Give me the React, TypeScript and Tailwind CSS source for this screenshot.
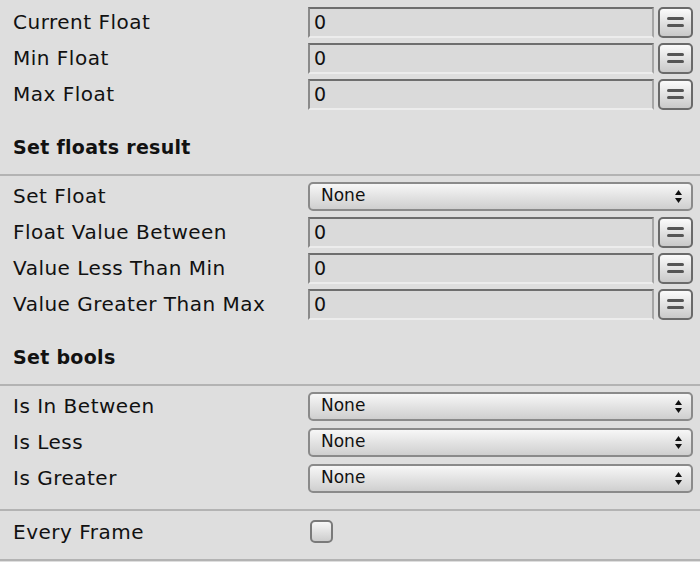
import React from 'react';

const font = { fontFamily: '"DejaVu Sans", "Liberation Sans", sans-serif' };

const Label: React.FC<{ text: string }> = ({ text }) => (
  <div className="w-[308px] shrink-0 pl-[13px] text-[20px] tracking-[0.5px] text-[#111] leading-none">{text}</div>
);

const FloatRow: React.FC<{ label: string }> = ({ label }) => (
  <div className="flex h-[36px] items-center">
    <Label text={label} />
    <div className="flex h-[31px] w-[346px] items-center border-2 border-t-[#6e6e6e] border-l-[#8a8a8a] border-r-[#a6a6a6] border-b-[#ececec] bg-[#dadada] pl-[4px] text-[19px] text-[#111]">
      0
    </div>
    <button className="ml-[4px] flex h-[31px] w-[35px] flex-col items-center justify-center gap-[4px] rounded-[5px] border-2 border-[#6a6a6a] bg-gradient-to-b from-[#fbfbfb] to-[#c9c9c9]">
      <span className="block h-[3px] w-[17px] rounded-full bg-[#555]" />
      <span className="block h-[3px] w-[17px] rounded-full bg-[#555]" />
    </button>
  </div>
);

const DropdownRow: React.FC<{ label: string }> = ({ label }) => (
  <div className="flex h-[36px] items-center">
    <Label text={label} />
    <div className="flex h-[29px] w-[385px] items-center justify-between rounded-[5px] border-2 border-[#8a8a8a] bg-gradient-to-b from-[#f7f7f7] to-[#cfcfcf] pl-[11px] pr-[9px] text-[17px] text-[#111]">
      <span>None</span>
      <svg width="7" height="13" viewBox="0 0 7 13">
        <path d="M3.5 0 L7 5 L0 5 Z" fill="#111" />
        <path d="M3.5 13 L7 8 L0 8 Z" fill="#111" />
      </svg>
    </div>
  </div>
);

const Header: React.FC<{ text: string }> = ({ text }) => (
  <div className="flex h-[62px] items-center pl-[13px] pt-[8px] text-[19px] font-bold tracking-[0.3px] text-[#111]">{text}</div>
);

const Separator = () => <div className="h-[2px] bg-[#b3b3b3]" />;

export default function App() {
  return (
    <div className="h-[562px] w-[700px] overflow-hidden bg-[#dedede]" style={font}>
      <div className="pt-[4px]">
        <FloatRow label="Current Float" />
        <FloatRow label="Min Float" />
        <FloatRow label="Max Float" />
      </div>
      <Header text="Set floats result" />
      <Separator />
      <div className="pt-[2px]">
        <DropdownRow label="Set Float" />
        <FloatRow label="Float Value Between" />
        <FloatRow label="Value Less Than Min" />
        <FloatRow label="Value Greater Than Max" />
      </div>
      <Header text="Set bools" />
      <Separator />
      <div className="pt-[2px]">
        <DropdownRow label="Is In Between" />
        <DropdownRow label="Is Less" />
        <DropdownRow label="Is Greater" />
      </div>
      <div className="h-[13px]" />
      <Separator />
      <div className="flex h-[48px] items-center pb-[7px]">
        <Label text="Every Frame" />
        <div className="ml-[2px] h-[23px] w-[23px] rounded-[5px] border-2 border-[#7a7a7a] bg-gradient-to-b from-[#f7f7f7] to-[#cdcdcd]" />
      </div>
      <Separator />
    </div>
  );
}
